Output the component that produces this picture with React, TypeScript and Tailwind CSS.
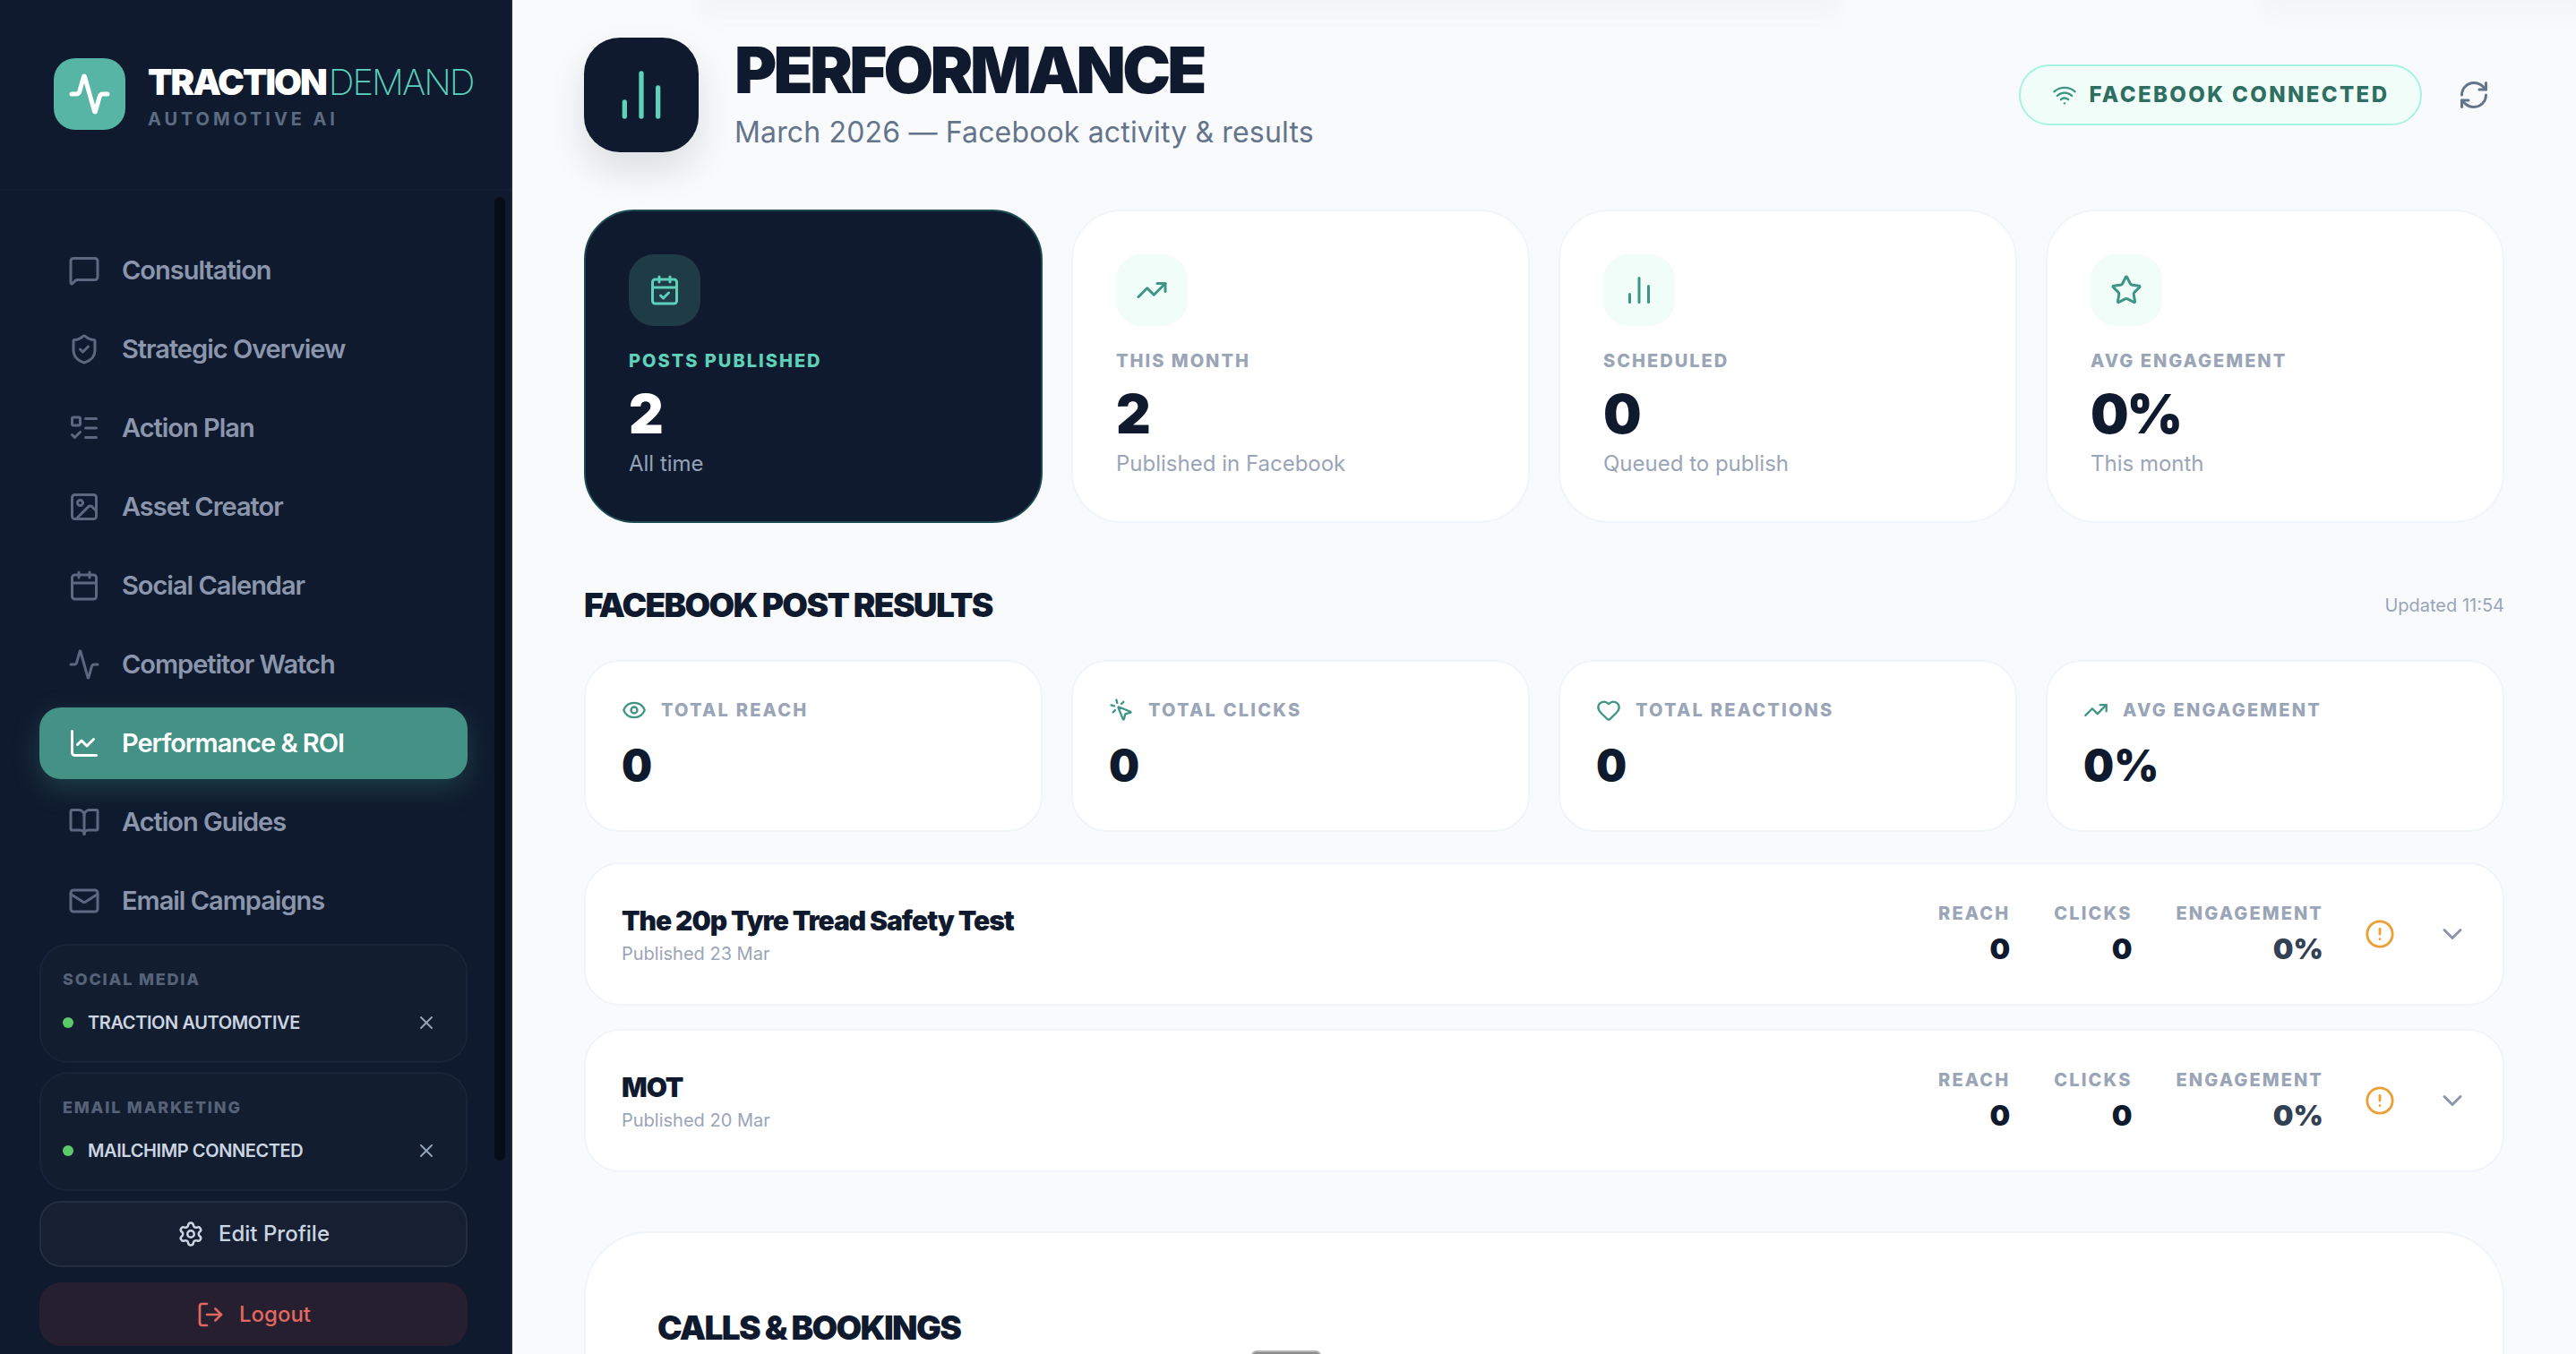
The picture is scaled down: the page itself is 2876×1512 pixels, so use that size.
import {
  Activity,
  BookOpen,
  Calendar,
  CalendarCheck,
  ChartLine,
  ChartNoAxesColumn,
  ChevronDown,
  CircleAlert,
  Eye,
  Heart,
  Image as ImageIcon,
  ListTodo,
  LogOut,
  Mail,
  MessageSquare,
  MousePointerClick,
  RefreshCw,
  Settings,
  ShieldCheck,
  Star,
  TrendingUp,
  Wifi,
  X,
} from "lucide-react";

const NAV = [
  { label: "Consultation", icon: MessageSquare },
  { label: "Strategic Overview", icon: ShieldCheck },
  { label: "Action Plan", icon: ListTodo },
  { label: "Asset Creator", icon: ImageIcon },
  { label: "Social Calendar", icon: Calendar },
  { label: "Competitor Watch", icon: Activity },
  { label: "Performance & ROI", icon: ChartLine, active: true },
  { label: "Action Guides", icon: BookOpen },
  { label: "Email Campaigns", icon: Mail },
];

const STATS = [
  { label: "POSTS PUBLISHED", value: "2", sub: "All time", icon: CalendarCheck, dark: true },
  { label: "THIS MONTH", value: "2", sub: "Published in Facebook", icon: TrendingUp },
  { label: "SCHEDULED", value: "0", sub: "Queued to publish", icon: ChartNoAxesColumn },
  { label: "AVG ENGAGEMENT", value: "0%", sub: "This month", icon: Star },
];

const METRICS = [
  { label: "TOTAL REACH", value: "0", icon: Eye },
  { label: "TOTAL CLICKS", value: "0", icon: MousePointerClick },
  { label: "TOTAL REACTIONS", value: "0", icon: Heart },
  { label: "AVG ENGAGEMENT", value: "0%", icon: TrendingUp },
];

const POSTS = [
  { title: "The 20p Tyre Tread Safety Test", date: "Published 23 Mar" },
  { title: "MOT", date: "Published 20 Mar" },
];

function Connection({ label, name }: { label: string; name: string }) {
  return (
    <div className="h-[133px] rounded-[32px] border-2 border-[#19233a] bg-[#131d30] px-[24px] pt-[26px]">
      <div className="text-[18px] font-extrabold leading-[24px] tracking-[0.1em] text-[#566278]">{label}</div>
      <div className="mt-[21px] flex h-[30px] items-center">
        <span className="h-[12px] w-[12px] rounded-full bg-[#5cc96b]" />
        <span className="ml-[16px] flex-1 text-[20px] font-semibold tracking-[-0.02em] text-[#cbd5e1]">{name}</span>
        <X className="mr-[8px] h-[24px] w-[24px] text-[#94a3b8]" strokeWidth={2} />
      </div>
    </div>
  );
}

function Sidebar() {
  return (
    <aside className="relative flex h-full w-[572px] shrink-0 flex-col border-r-2 border-[#1b263a] bg-[#0f1a2e]">
      <div className="flex h-[213px] shrink-0 items-start gap-[25px] border-b-2 border-[#141f33] pl-[60px] pt-[65px]">
        <div className="flex h-[80px] w-[80px] items-center justify-center rounded-[24px] bg-[#57b5a5]">
          <Activity className="h-[48px] w-[48px] text-white" strokeWidth={2.5} />
        </div>
        <div>
          <div className="mt-[3px] flex text-[40px] leading-[48px] tracking-[-0.05em] text-white">
            <span className="font-black">TRACTION</span>
            <span className="ml-[3px] font-extralight text-[#5ad2bf]">DEMAND</span>
          </div>
          <div className="mt-[4px] text-[20px] font-bold leading-[26px] tracking-[0.195em] text-[#5d6b82]">AUTOMOTIVE AI</div>
        </div>
      </div>

      <nav className="flex flex-col gap-[8px] px-[44px] pt-[49px]">
        {NAV.map((item) => (
          <div
            key={item.label}
            className={`flex h-[80px] w-[478px] items-center gap-[24px] rounded-[24px] pl-[32px] ${
              item.active ? "bg-[#439285] text-white shadow-[0_10px_30px_rgba(67,146,133,0.3)]" : "text-[#8b96ad]"
            }`}
          >
            <item.icon className={`h-[36px] w-[36px] ${item.active ? "text-white" : "text-[#5b6880]"}`} strokeWidth={2} />
            <span className="text-[29px] font-semibold tracking-[-0.035em]">{item.label}</span>
          </div>
        ))}
      </nav>

      <div className="absolute right-[6px] top-[220px] h-[1076px] w-[12px] rounded-full bg-[#070c16]" />

      <div className="mt-[8px] flex flex-col gap-[10px] pl-[44px] pr-[48px]">
        <Connection label="SOCIAL MEDIA" name="TRACTION AUTOMOTIVE" />
        <Connection label="EMAIL MARKETING" name="MAILCHIMP CONNECTED" />
      </div>

      <div className="ml-[44px] mt-[11px] flex h-[74px] w-[478px] items-center justify-center gap-[16px] self-start rounded-[24px] border-2 border-[#242e42] bg-[#162032] text-[24px] font-medium text-[#cbd5e1]">
        <Settings className="h-[30px] w-[30px]" strokeWidth={2} />
        Edit Profile
      </div>
      <div className="ml-[44px] mt-[17px] flex h-[71px] w-[478px] items-center justify-center gap-[16px] self-start rounded-[24px] bg-[#261f2f] text-[24px] font-medium text-[#e2685f]">
        <LogOut className="h-[32px] w-[32px]" strokeWidth={2} />
        Logout
      </div>
    </aside>
  );
}

function StatCard({ stat }: { stat: (typeof STATS)[number] }) {
  const dark = stat.dark;
  return (
    <div
      className={`h-[350px] rounded-[56px] border-2 px-[48px] pt-[48px] ${
        dark ? "border-[#1c4a52] bg-[#0f1a2e]" : "border-[#f1f5f9] bg-white"
      }`}
    >
      <div className={`flex h-[80px] w-[80px] items-center justify-center rounded-[28px] ${dark ? "bg-[#1f3b45]" : "bg-[#f0fdf9]"}`}>
        <stat.icon className={`h-[36px] w-[36px] ${dark ? "text-[#5fd0b9]" : "text-[#3f9585]"}`} strokeWidth={2} />
      </div>
      <div className={`mt-[26px] text-[20px] font-extrabold leading-[26px] tracking-[0.1em] ${dark ? "text-[#5fd0b9]" : "text-[#9aa5b8]"}`}>
        {stat.label}
      </div>
      <div className={`mt-[13px] text-[60px] font-black leading-[66px] tracking-[-0.035em] ${dark ? "text-white" : "text-[#0f1a2e]"}`}>{stat.value}</div>
      <div className={`mt-[5px] text-[24px] leading-[36px] ${dark ? "text-[#94a3b8]" : "text-[#9aa5b8]"}`}>{stat.sub}</div>
    </div>
  );
}

function MetricCard({ metric }: { metric: (typeof METRICS)[number] }) {
  return (
    <div className="h-[192px] rounded-[40px] border-2 border-[#f1f5f9] bg-white px-[40px] pt-[38px]">
      <div className="flex h-[32px] items-center gap-[16px]">
        <metric.icon className="h-[28px] w-[28px] text-[#3f9585]" strokeWidth={2} />
        <span className="text-[20px] font-extrabold tracking-[0.11em] text-[#9aa5b8]">{metric.label}</span>
      </div>
      <div className="mt-[18px] text-[48px] font-black leading-[56px] text-[#0f1a2e]">{metric.value}</div>
    </div>
  );
}

function PostColumn({ label, value, muted }: { label: string; value: string; muted?: boolean }) {
  return (
    <div className="text-right">
      <div className="text-[20px] font-extrabold leading-[28px] tracking-[0.105em] text-[#9aa5b8]">{label}</div>
      <div className={`mt-[6px] text-[32px] font-black leading-[40px] ${muted ? "text-[#334155]" : "text-[#0f1a2e]"}`}>{value}</div>
    </div>
  );
}

function PostRow({ title, date }: { title: string; date: string }) {
  return (
    <div className="flex h-[160px] items-center rounded-[40px] border-2 border-[#f1f5f9] bg-white pl-[40px] pr-[38px]">
      <div className="flex-1">
        <div className="mb-[2px] text-[30px] font-black leading-[40px] tracking-[-0.035em] text-[#0f1a2e]">{title}</div>
        <div className="mt-[3px] text-[20px] leading-[28px] text-[#9aa5b8]">{date}</div>
      </div>
      <div className="mb-[1px] flex gap-[49px]">
        <PostColumn label="REACH" value="0" />
        <PostColumn label="CLICKS" value="0" />
        <PostColumn label="ENGAGEMENT" value="0%" muted />
      </div>
      <CircleAlert className="ml-[46px] h-[34px] w-[34px] text-[#ec9f32]" strokeWidth={2} />
      <ChevronDown className="ml-[46px] h-[36px] w-[36px] text-[#8b96ad]" strokeWidth={2} />
    </div>
  );
}

export default function App() {
  return (
    <div className="flex h-[1512px] w-[2876px] overflow-hidden bg-[#f8fafc] font-['Inter',sans-serif]">
      <Sidebar />
      <main className="relative h-full flex-1 overflow-hidden px-[80px] pt-[42px]">
        <div className="absolute left-[210px] top-[-10px] h-[42px] w-[1270px] bg-gradient-to-b from-[#f1f2f4] to-transparent blur-[8px]" />
        <div className="absolute right-[-20px] top-[-10px] h-[40px] w-[370px] bg-gradient-to-b from-[#f2f3f5] to-transparent blur-[8px]" />

        <header className="relative flex items-start">
          <div className="flex h-[128px] w-[128px] items-center justify-center rounded-[40px] bg-[#0f1a2e] shadow-[0_20px_40px_rgba(15,23,42,0.12)]">
            <ChartNoAxesColumn className="h-[64px] w-[64px] text-[#5fd0b9]" strokeWidth={2} />
          </div>
          <div className="ml-[40px] flex-1">
            <h1 className="text-[72px] font-black leading-[72px] tracking-[-0.052em] text-[#0f1a2e]">PERFORMANCE</h1>
            <p className="mt-[12px] text-[32px] leading-[44px] tracking-[0.005em] text-[#64748b]">March 2026 — Facebook activity &amp; results</p>
          </div>
          <div className="mt-[30px] flex h-[68px] w-[450px] items-center justify-center gap-[14px] rounded-full border-2 border-[#a7f3e0] bg-[#f0fdf9]">
            <Wifi className="h-[28px] w-[28px] text-[#3f9585]" strokeWidth={2} />
            <span className="text-[24px] font-extrabold tracking-[0.1em] text-[#2f6f62]">FACEBOOK CONNECTED</span>
          </div>
          <RefreshCw className="ml-[40px] mr-[16px] mt-[46px] h-[36px] w-[36px] text-[#64748b]" strokeWidth={2} />
        </header>

        <section className="relative mt-[64px] grid grid-cols-4 gap-[32px]">
          {STATS.map((s) => (
            <StatCard key={s.label} stat={s} />
          ))}
        </section>

        <div className="mt-[68px] flex items-center justify-between">
          <h2 className="text-[37px] font-black leading-[48px] tracking-[-0.045em] text-[#0f1a2e]">FACEBOOK POST RESULTS</h2>
          <span className="text-[20px] text-[#9aa5b8]">Updated 11:54</span>
        </div>

        <section className="mt-[37px] grid grid-cols-4 gap-[32px]">
          {METRICS.map((m) => (
            <MetricCard key={m.label} metric={m} />
          ))}
        </section>

        <section className="mt-[34px] flex flex-col gap-[26px]">
          {POSTS.map((p) => (
            <PostRow key={p.title} {...p} />
          ))}
        </section>

        <section className="relative mt-[66px] h-[400px] rounded-[72px] border-2 border-[#f1f5f9] bg-white pl-[80px] pt-[82px]">
          <h2 className="text-[37px] font-black leading-[48px] tracking-[-0.045em] text-[#0f1a2e]">CALLS &amp; BOOKINGS</h2>
          <div className="absolute left-[743px] top-[131px] h-[20px] w-[78px] rounded-t-[6px] border-2 border-[#b5b5b5] bg-[#8c8c8c]" />
        </section>
      </main>
    </div>
  );
}
